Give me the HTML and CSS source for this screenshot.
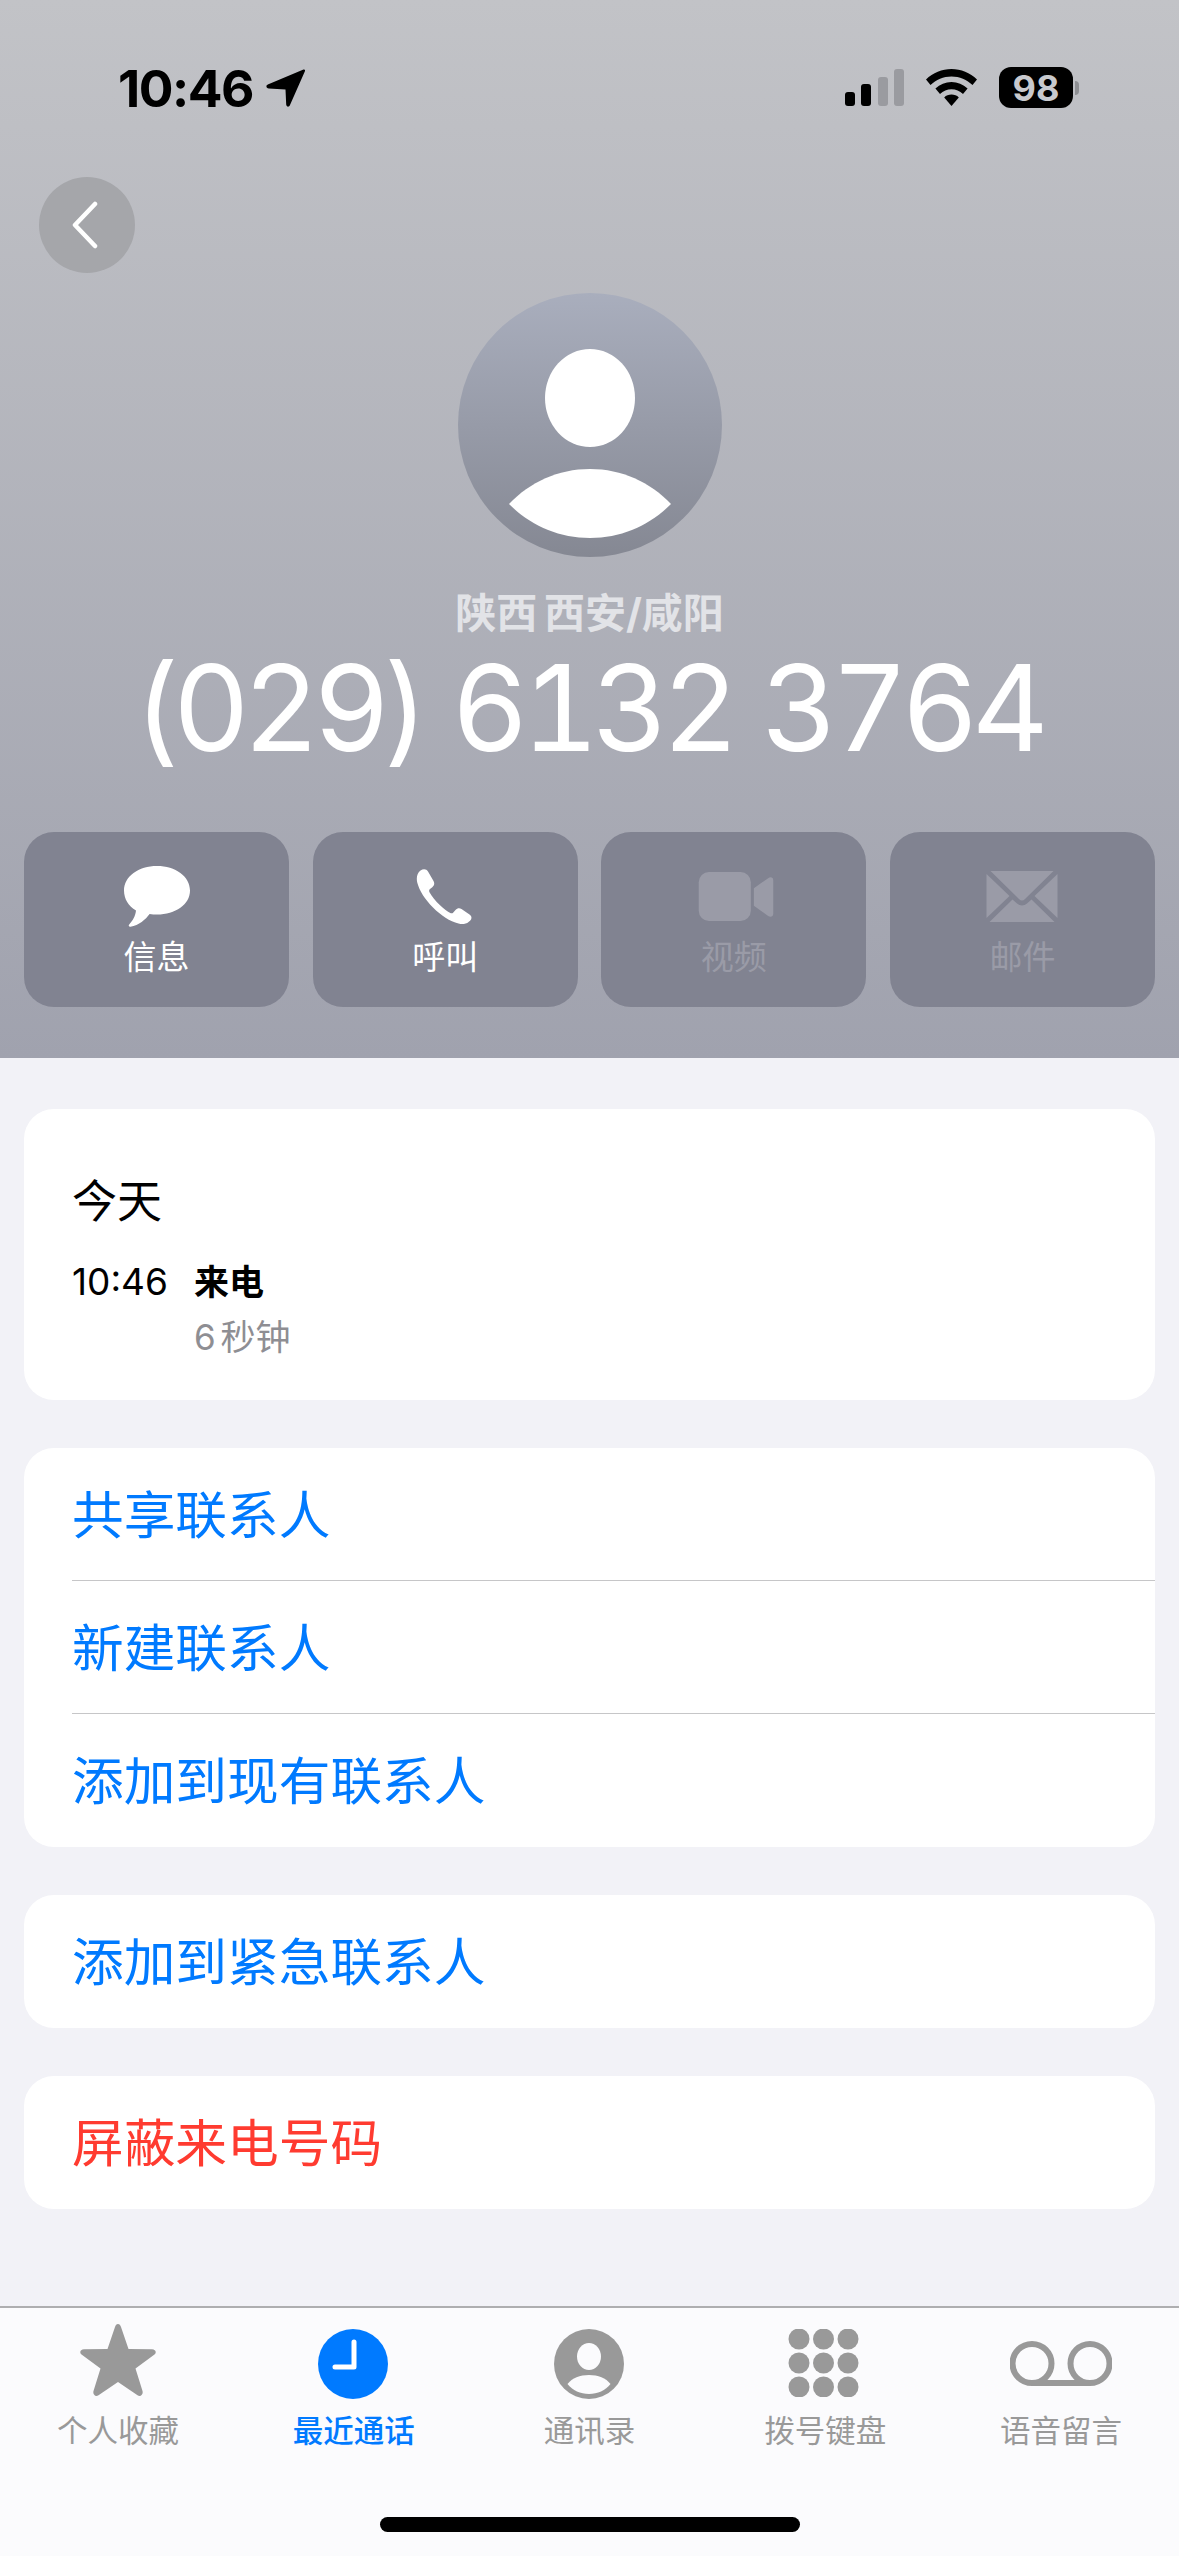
FILE: index.html
```html
<!DOCTYPE html>
<html lang="zh-CN">
  <head>
    <meta charset="UTF-8" />
    <meta name="viewport" content="width=device-width, initial-scale=1.0" />
    <title>未知来电</title>
    <link rel="stylesheet" href="styles.css">
  </head>
  <body>
    <header class="hero">
      <div class="status">
        <div class="status-left">
          <span class="clock">10:46</span>
          <svg class="loc" viewBox="0 0 39 38"><path d="M37.5 0.6 C38.6 0.2 39.3 1 38.9 2.2 L24 36 C23.2 38.2 20.6 38.4 20.2 35.6 L19.5 20.5 L2.8 19.6 C0 19.3 -0.3 16.6 1.8 15.6 Z"/></svg>
        </div>
        <div class="status-right">
          <svg class="signal" viewBox="0 0 59 37">
            <rect x="0" y="23" width="10" height="14" rx="3"/>
            <rect x="16" y="15" width="10" height="22" rx="3"/>
            <rect class="off" x="33" y="8" width="10" height="29" rx="3"/>
            <rect class="off" x="49" y="0" width="10" height="37" rx="3"/>
          </svg>
          <svg class="wifi" viewBox="0 0 51 37">
            <path d="M25.5 0 C35 0 44 3.8 51 10.5 L46.5 16 C41 10.6 33.5 7.4 25.5 7.4 C17.5 7.4 10 10.6 4.5 16 L0 10.5 C7 3.8 16 0 25.5 0 Z"/>
            <path d="M25.5 13 C31.6 13 37 15.3 41.6 19.6 L37 25 C33.8 22 29.8 20.3 25.5 20.3 C21.2 20.3 17.2 22 14 25 L9.4 19.6 C14 15.3 19.4 13 25.5 13 Z"/>
            <path d="M25.5 25.6 C28.4 25.6 30.8 26.6 32.8 28.4 L25.5 37 L18.2 28.4 C20.2 26.6 22.6 25.6 25.5 25.6 Z"/>
          </svg>
          <div class="battery"><span class="battery-level">98</span><i class="battery-nub"></i></div>
        </div>
      </div>

      <button class="back">
        <svg viewBox="0 0 30 48"><path d="M25 3 L5 24 L25 45"/></svg>
      </button>

      <svg class="avatar" viewBox="0 0 264 264">
        <defs>
          <linearGradient id="avatar-bg" x1="0" y1="0" x2="0" y2="1">
            <stop offset="0" stop-color="#a9aebd"/>
            <stop offset="1" stop-color="#858893"/>
          </linearGradient>
        </defs>
        <circle cx="132" cy="132" r="132" fill="url(#avatar-bg)"/>
        <ellipse cx="132" cy="105" rx="45" ry="49" fill="#fff"/>
        <path d="M51 211 C72 189 100 176 132 176 C164 176 192 189 213 211 C192 232 164 245 132 245 C100 245 72 232 51 211 Z" fill="#fff"/>
      </svg>

      <div class="region">陕西 西安/咸阳</div>
      <div class="number">(029) 6132 3764</div>

      <div class="actions">
        <div class="action">
          <svg viewBox="0 0 66 61"><path d="M33 0 C51.500 0 66 10.500 66 24.500 C66 38.500 51.500 48.500 33 48.500 C30.500 48.500 28 48.300 25.600 47.900 C21.500 53.500 15 59 6.500 60.800 C4.800 61 4.200 59.600 5.200 58.500 C8.500 55 11.500 50 12 44.500 C4.500 40 0 33 0 24.500 C0 10.500 14.500 0 33 0 Z"/></svg>
          <span>信息</span>
        </div>
        <div class="action">
          <svg class="ic-phone" viewBox="0 0 55 55"><path d="M4 1.500 C7 -0.500 10 0 11.500 2.500 L17 12 C18.300 14.500 17.800 16.500 15.800 18.200 L13.500 20 C12.500 20.800 12.400 22 13 23.200 C15.500 27.500 19 31.800 23.300 36 C27.500 40 31 42.500 33.800 44 C35 44.600 36 44.300 36.800 43.400 L39 41 C40.800 39 43 38.800 45 40 L53 45.500 C55.300 47 55.600 49.500 53.800 51.500 C50.500 55 46.500 55.800 42 54.600 C33.500 52.400 24.500 46.500 16.500 38.500 C8.500 30.500 3 22 0.800 13.800 C-0.500 8.500 0.800 4 4 1.500 Z"/></svg>
          <span>呼叫</span>
        </div>
        <div class="action disabled">
          <svg class="ic-video" viewBox="0 0 73 48"><rect x="0" y="0" width="51" height="48" rx="10"/><path d="M54 16 L68 6 C70 4.500 73 5 73 8 L73 41 C73 44 70 44.500 68 43 L54 33 Z"/></svg>
          <span>视频</span>
        </div>
        <div class="action disabled">
          <svg class="ic-mail" viewBox="0 0 71 51"><path d="M4 0 L67 0 L38.500 28 C36.500 30 34.500 30 32.500 28 Z"/><path d="M0 3 L0 47 L23 25 Z"/><path d="M71 3 L71 47 L48 25 Z"/><path d="M3 51 L26 28.500 L30.500 32.500 C33.500 35 37.500 35 40.500 32.500 L45 28.500 L68 51 Z"/></svg>
          <span>邮件</span>
        </div>
      </div>
    </header>

    <main class="content">
      <section class="card history">
        <h2>今天</h2>
        <div class="call">
          <span class="call-time">10:46</span>
          <div>
            <div class="call-type">来电</div>
            <div class="call-length">6 秒钟</div>
          </div>
        </div>
      </section>

      <section class="card">
        <a class="row">共享联系人</a>
        <a class="row">新建联系人</a>
        <a class="row">添加到现有联系人</a>
      </section>

      <section class="card">
        <a class="row">添加到紧急联系人</a>
      </section>

      <section class="card">
        <a class="row danger">屏蔽来电号码</a>
      </section>
    </main>

    <nav class="tabs">
      <div class="tab">
        <svg class="ic-star" viewBox="0 0 76 73"><path d="M38 0 C39.500 0 40.300 1 41 3 L48.500 25 L72 25.300 C75.500 25.400 77 28.500 74.500 30.500 L55.500 44.500 L62.500 67 C63.500 70.500 60.500 73.500 57.500 71.300 L38 58 L18.500 71.300 C15.500 73.500 12.500 70.500 13.500 67 L20.500 44.500 L1.500 30.500 C-1 28.500 0.500 25.400 4 25.300 L27.500 25 L35 3 C35.700 1 36.500 0 38 0 Z"/></svg>
        <span>个人收藏</span>
      </div>
      <div class="tab active">
        <svg class="ic-round" viewBox="0 0 70 70"><circle cx="35" cy="35" r="35"/><path class="hand-line" d="M36 13 L36 38 L17 38"/></svg>
        <span>最近通话</span>
      </div>
      <div class="tab">
        <svg class="ic-round" viewBox="0 0 70 70"><circle cx="35" cy="35" r="35"/><ellipse class="hand" cx="35" cy="27.500" rx="12" ry="13.500"/><path class="hand" d="M13.500 55 C18 49 26 46 35 46 C44 46 52 49 56.500 55 C51.500 61.500 43.500 65 35 65 C26.500 65 18.500 61.500 13.500 55 Z"/></svg>
        <span>通讯录</span>
      </div>
      <div class="tab">
        <svg class="ic-keypad" viewBox="0 0 71 68">
          <circle cx="11" cy="10" r="10.500"/><circle cx="35.500" cy="10" r="10.500"/><circle cx="60" cy="10" r="10.500"/>
          <circle cx="11" cy="34" r="10.500"/><circle cx="35.500" cy="34" r="10.500"/><circle cx="60" cy="34" r="10.500"/>
          <circle cx="11" cy="58" r="10.500"/><circle cx="35.500" cy="58" r="10.500"/><circle cx="60" cy="58" r="10.500"/>
        </svg>
        <span>拨号键盘</span>
      </div>
      <div class="tab">
        <svg class="ic-voicemail" viewBox="0 0 102 45"><circle cx="22" cy="22.500" r="19.500"/><circle cx="80" cy="22.500" r="19.500"/><path d="M22 42 L80 42"/></svg>
        <span>语音留言</span>
      </div>
      <div class="home-bar"></div>
    </nav>
  </body>
</html>
```

FILE: styles.css
```css
* {
  box-sizing: border-box;
}
body {
  margin: 0;
  width: 1179px;
  height: 2556px;
  overflow: hidden;
  display: flex;
  flex-direction: column;
  background: #f2f2f7;
  font-family: Inter, "Noto Sans CJK SC", sans-serif;
}

/* top part */
.hero {
  height: 1058px;
  padding: 0 24px;
  display: flex;
  flex-direction: column;
  align-items: center;
  background: linear-gradient(#c2c3c7, #a0a2ae);
}
.status {
  align-self: stretch;
  height: 108px;
  padding: 67px 76px 0 94px;
  display: flex;
  justify-content: space-between;
}
.status-left {
  display: flex;
  gap: 13px;
  height: 41px;
  align-items: center;
}
.clock {
  font-size: 51.500px;
  font-weight: 700;
  letter-spacing: -1.500px;
  color: #000;
}
.loc {
  width: 39px;
  height: 38px;
}
.status-right {
  display: flex;
  gap: 22px;
  height: 41px;
  align-items: center;
}
.signal {
  width: 59px;
  height: 37px;
  fill: #000;
  .off {
    fill: #9a9ba0;
  }
}
.wifi {
  width: 51px;
  height: 37px;
}
.battery {
  display: flex;
  align-items: center;
  gap: 2px;
}
.battery-level {
  width: 74px;
  height: 41px;
  border-radius: 12px;
  background: #000;
  color: #c8c9cd;
  font-size: 36px;
  font-weight: 700;
  display: flex;
  justify-content: center;
  align-items: center;
}
.battery-nub {
  width: 4px;
  height: 14px;
  border-radius: 0 4px 4px 0;
  background: #8e8f93;
}
.back {
  align-self: flex-start;
  margin: 69px 0 0 15px;
  width: 96px;
  height: 96px;
  padding: 0;
  border: 0;
  border-radius: 50%;
  background: #a5a6aa;
  display: flex;
  justify-content: center;
  align-items: center;
  svg {
    width: 30px;
    height: 48px;
    margin-left: -4px;
    fill: none;
    stroke: #fff;
    stroke-width: 4.5;
    stroke-linecap: round;
    stroke-linejoin: round;
  }
}
.avatar {
  width: 264px;
  height: 264px;
  margin-top: 20px;
}
.region {
  margin-top: 28px;
  height: 56px;
  line-height: 56px;
  font-size: 41px;
  font-weight: 700;
  word-spacing: -3px;
  color: #e2e3e7;
}
.number {
  margin: 6px 0 0 -4px;
  height: 122px;
  line-height: 122px;
  font-size: 119px;
  font-weight: 375;
  font-variant-numeric: tabular-nums;
  letter-spacing: -7px;
  word-spacing: 4px;
  color: #fff;
  white-space: nowrap;
}
.actions {
  align-self: stretch;
  margin-top: 63px;
  display: grid;
  grid-template-columns: repeat(4, 265px);
  justify-content: space-between;
}
.action {
  height: 175px;
  padding-top: 34px;
  border-radius: 30px;
  background: #818391;
  color: #fff;
  display: flex;
  flex-direction: column;
  align-items: center;
  svg {
    height: 61px;
    width: 80px;
    fill: #fff;
  }
  .ic-phone {
    padding: 3px 0;
    margin-left: -2px;
  }
  .ic-video {
    padding: 6px 0;
    margin-left: 5px;
  }
  .ic-mail {
    padding: 5px 0;
  }
  span {
    margin-top: 10px;
    font-size: 33px;
    line-height: 40px;
  }
  &.disabled {
    color: #9a9ba7;
    svg {
      fill: #9a9ba7;
    }
  }
}

/* lists */
.content {
  flex: 1;
  padding: 51px 24px 0;
  display: flex;
  flex-direction: column;
  gap: 48px;
}
.card {
  background: #fff;
  border-radius: 30px;
  overflow: hidden;
}
.history {
  height: 291px;
  padding: 62px 48px 0;
  h2 {
    margin: 0 0 25px;
    font-size: 45px;
    font-weight: 400;
    line-height: 62px;
    color: #000;
  }
}
.call {
  display: flex;
  gap: 26px;
}
.call-time {
  font-size: 37px;
  line-height: 48px;
  color: #000;
}
.call-type {
  font-size: 35px;
  font-weight: 700;
  line-height: 48px;
  color: #000;
}
.call-length {
  margin-top: 7px;
  font-size: 35px;
  line-height: 48px;
  word-spacing: -5px;
  color: #8e8e93;
}
.row {
  display: block;
  height: 133px;
  margin-left: 48px;
  line-height: 134px;
  font-size: 51.700px;
  color: #007aff;
  &:not(:last-child) {
    border-bottom: 1px solid #c6c6c8;
  }
  &.danger {
    color: #ff3b30;
  }
}

/* tab bar */
.tabs {
  position: relative;
  height: 250px;
  padding-top: 16px;
  border-top: 2px solid #aeaeb0;
  background: #fbfbfd;
  display: grid;
  grid-template-columns: repeat(5, 1fr);
  align-items: start;
}
.tab {
  display: flex;
  flex-direction: column;
  align-items: center;
  color: #999;
  fill: #999;
  span {
    margin-top: 12px;
    font-size: 30.500px;
    line-height: 36px;
  }
  svg {
    display: block;
  }
  .ic-star {
    width: 76px;
    height: 73px;
    margin-bottom: 4px;
  }
  .ic-round {
    width: 70px;
    height: 70px;
    margin: 5px 0 2px;
    .hand {
      fill: #fbfbfd;
    }
  }
  .ic-keypad {
    width: 71px;
    height: 68px;
    margin: 5px 0 4px -3px;
  }
  .ic-voicemail {
    width: 102px;
    height: 45px;
    margin: 17px 0 15px;
    fill: none;
    stroke: #999;
    stroke-width: 6;
  }
  &.active {
    color: #007aff;
    fill: #007aff;
    span {
      font-weight: 500;
    }
    .ic-round {
      margin-left: -2px;
    }
    .hand-line {
      fill: none;
      stroke: #fff;
      stroke-width: 5;
      stroke-linecap: round;
      stroke-linejoin: round;
    }
  }
}
.home-bar {
  position: absolute;
  left: 380px;
  bottom: 24px;
  width: 420px;
  height: 15px;
  border-radius: 8px;
  background: #000;
}
```
